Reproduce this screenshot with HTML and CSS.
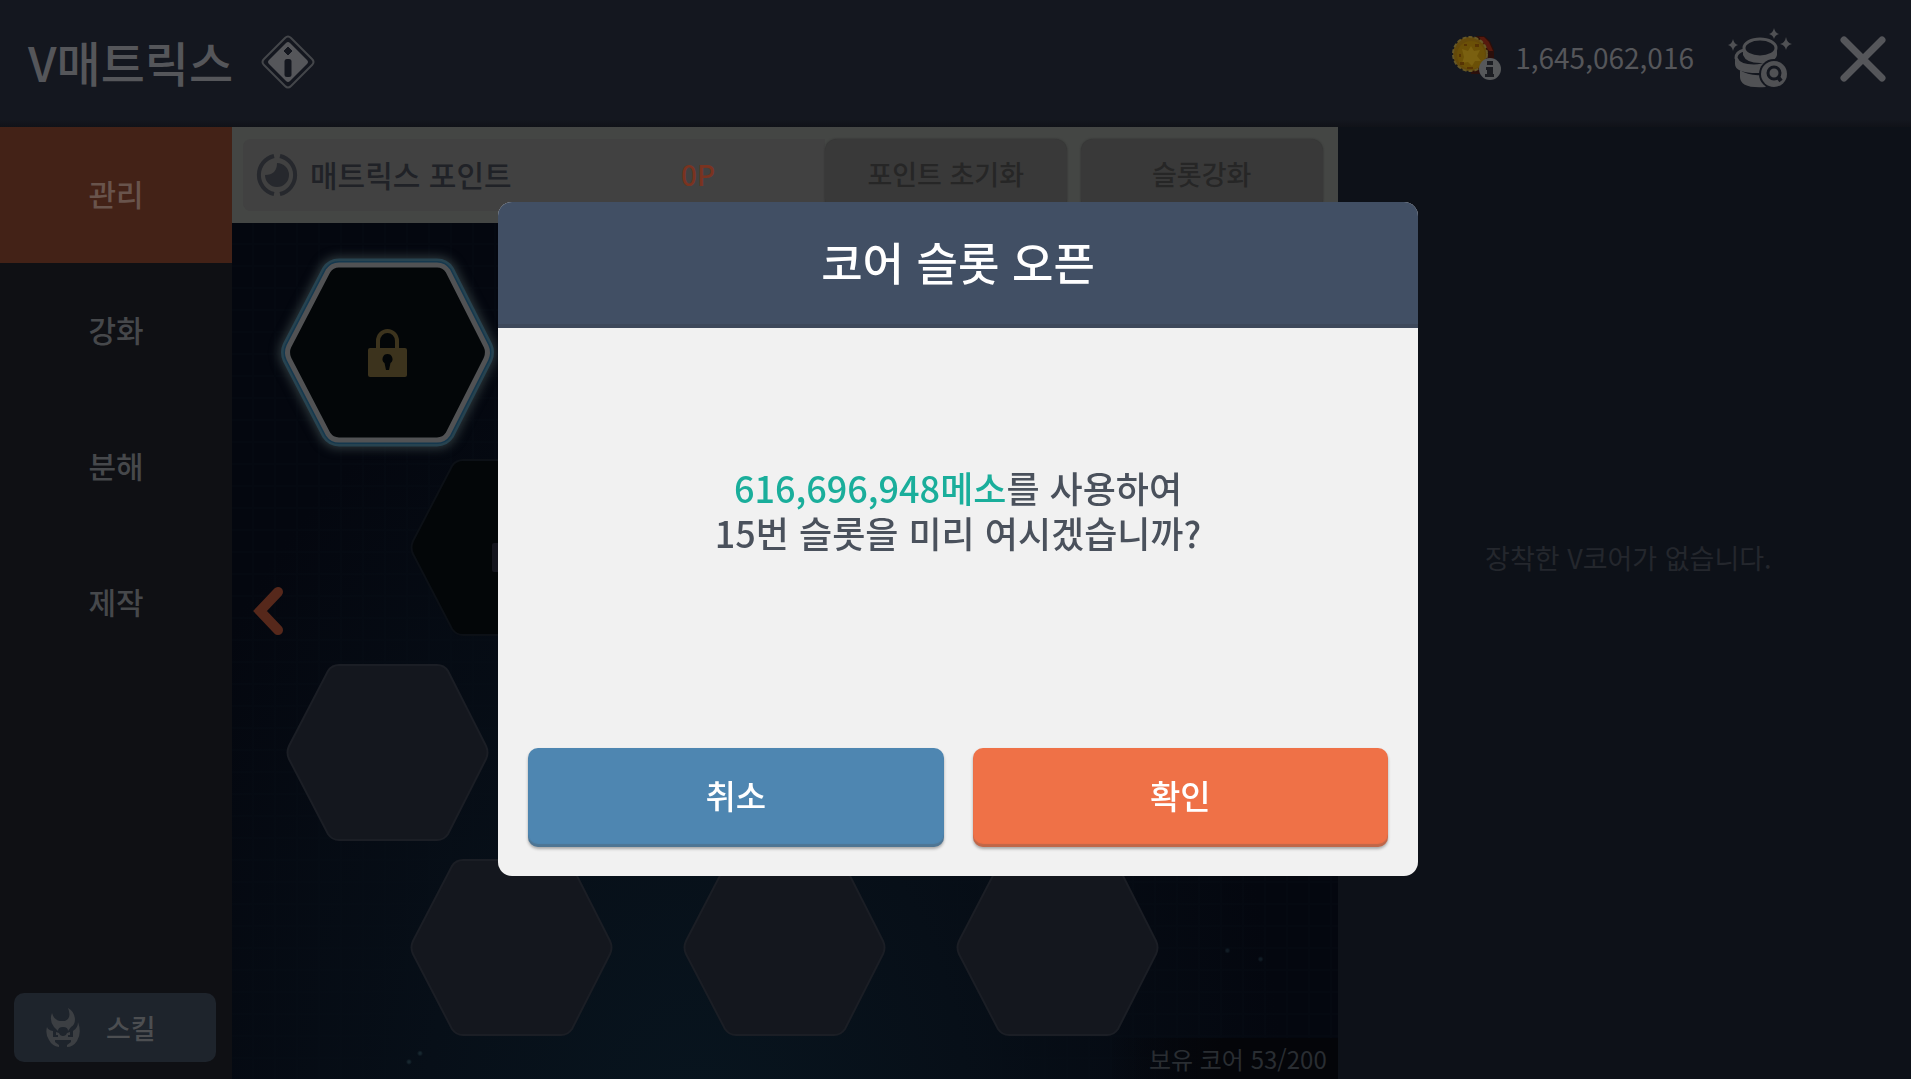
FILE: index.html
```html
<!DOCTYPE html>
<html lang="ko">
<head>
    <meta charset="UTF-8">
    <meta name="viewport" content="width=device-width, initial-scale=1.0">
    <title>V매트릭스</title>
    <link rel="stylesheet" href="styles.css">
</head>
<body>

    <!-- Shared shapes -->
    <svg class="defs" width="0" height="0">
        <defs>
            <path id="hex" d="M53 1 H151 Q158 1 162 7 L200 82 Q203 88.500 200 95 L162 170 Q158 176 151 176 H53 Q46 176 42 170 L3 95 Q0 88.500 3 82 L42 7 Q46 1 53 1 Z"/>
            <g id="lock">
                <path d="M10 22 V12 a9.500 10 0 0 1 19 0 V22" fill="none" stroke="currentColor" stroke-width="4"/>
                <path fill="currentColor" fill-rule="evenodd" d="M2 19 H37 Q39 19 39 21 V46 Q39 48 37 48 H2 Q0 48 0 46 V21 Q0 19 2 19 Z M19.500 25 a5 5 0 0 0 -3 9 l1.500 7 h3 l1.500 -7 a5 5 0 0 0 -3 -9 Z"/>
            </g>
        </defs>
    </svg>

    <!-- Header -->
    <header>
        <div class="title">
            <h1>V매트릭스</h1>
            <button class="icon-btn" aria-label="도움말">
                <svg width="54" height="54" viewBox="0 0 54 54">
                    <path d="M24 3 Q27 0 30 3 L51 24 Q54 27 51 30 L30 51 Q27 54 24 51 L3 30 Q0 27 3 24 Z" fill="none" stroke="#44464a" stroke-width="2"/>
                    <path d="M25 8 Q27 6 29 8 L46 25 Q48 27 46 29 L29 46 Q27 48 25 46 L8 29 Q6 27 8 25 Z" fill="#55565a"/>
                    <path d="M27 12 L31 16 L27 20 L23 16 Z" fill="#14171f" stroke="#14171f"/>
                    <rect x="23.500" y="24" width="7" height="18" rx="2.500" fill="#14171f"/>
                </svg>
            </button>
        </div>
        <div class="wallet">
            <svg width="50" height="46" viewBox="0 0 50 46">
                <path d="M25 1 h8 l6 5 l4 9 v10 l-5 8 l-8 6 h-10 z" fill="#2b0f0b"/>
                <path d="M28 2 h5 l5 5 l4 9 h-4 z" fill="#57190d"/>
                <circle cx="19" cy="19" r="17" fill="#64490a"/>
                <circle cx="19" cy="19" r="17" fill="none" stroke="#665726" stroke-width="2" stroke-dasharray="4 2"/>
                <circle cx="20" cy="20" r="14" fill="#6b5007"/>
                <path d="M11 14 l6 2 l3 -5 l3 5 l6 -1 l-3 6 l4 5 l-6 0 l-3 5 l-4 -4 l-6 1 l2 -6 z" fill="#7a6010"/>
                <path d="M9 27 h4 v3 h-4z M24 9 h4 v3 h-4z M16 32 h6 v2 h-6z M13 9 h3 v2 h-3z M8 19 h2 v3 h-2z" fill="#573404"/>
                <circle cx="39" cy="34" r="11" fill="#56585a"/>
                <path d="M36 26 h6 v4 h-6z M35 32 h7 v7 h1 v3 h-9 v-3 h2 v-4 h-1z" fill="#1b1d22"/>
            </svg>
            <span class="meso">1,645,062,016</span>
        </div>
        <button class="icon-btn" aria-label="메소 내역">
            <svg width="66" height="62" viewBox="0 0 66 62">
                <g fill="#505154">
                    <path d="M46 0 Q47 5 51 6 Q47 7 46 11 Q45 7 41 6 Q45 5 46 0Z"/>
                    <path d="M5 11 Q6 16 10 17 Q6 18 5 23 Q4 18 0 17 Q4 16 5 11Z"/>
                    <path d="M58 9 Q59 15 64 16 Q59 17 58 22 Q57 17 52 16 Q57 15 58 9Z"/>
                    <!-- stacked coins -->
                    <path d="M12 42 Q20 48 34 47 L38 59 Q12 61 12 49Z"/>
                    <path d="M7 30 Q10 40 34 39 V45 Q7 46 7 36Z"/>
                </g>
                <path d="M16 22 Q8 24 8 30 Q11 38 26 38 Q34 38 38 35" fill="none" stroke="#505154" stroke-width="3"/>
                <path d="M15 20 V27 Q18 35 32 35 Q47 35 49 27 V20" fill="#505154"/>
                <ellipse cx="32" cy="20" rx="16" ry="9" fill="#14171f" stroke="#505154" stroke-width="3"/>
                <circle cx="46" cy="46" r="15" fill="#14171f"/>
                <circle cx="46" cy="46" r="13" fill="#505154"/>
                <circle cx="46" cy="45" r="6" fill="none" stroke="#14171f" stroke-width="3"/>
                <path d="M50 49 L53 53" stroke="#14171f" stroke-width="4"/>
            </svg>
        </button>
        <button class="icon-btn close" aria-label="닫기">
            <svg width="46" height="46" viewBox="0 0 46 46">
                <path d="M4 4 L42 42 M42 4 L4 42" stroke="#55565a" stroke-width="7" stroke-linecap="round"/>
            </svg>
        </button>
    </header>

    <div class="content">
        <!-- Side menu -->
        <nav>
            <a href="#" class="tab active">관리</a>
            <a href="#" class="tab">강화</a>
            <a href="#" class="tab">분해</a>
            <a href="#" class="tab">제작</a>
            <button class="skill-btn">
                <svg width="34" height="40" viewBox="0 0 34 40" fill="#3c3f43">
                    <path d="M6 5 Q8 12 14 13 H19 Q26 10 22 0 Q28 3 29 11 Q29 17 25 19 L22 23 Q22 19 17 19 Q12 19 12 23 L8 19 Q3 13 6 5Z"/>
                    <path d="M1 19 Q2 22 7 23 V29 H12 V27 H10 V24 L13 25 Q14 28 17 28 Q20 28 21 25 L24 24 V27 H22 V29 H27 V23 Q32 20 32 14 Q36 25 31 33 Q27 39 21 39 V37 L25 34 V32 H9 V34 L13 37 V39 Q6 38 3 32 Q-1 26 1 19Z"/>
                </svg>
                스킬
            </button>
        </nav>

        <!-- Core slots -->
        <main>
            <div class="point-bar">
                <div class="points">
                    <svg width="44" height="44" viewBox="0 0 44 44">
                        <path d="M19 3 A19.500 19.500 0 0 0 19 41 M25 3 A19.500 19.500 0 0 1 25 41" fill="none" stroke="#26282d" stroke-width="4"/>
                        <path d="M22 10 A12 12 0 1 1 10 22 Q22 22 22 10Z" fill="#26282d"/>
                    </svg>
                    <span class="points-label">매트릭스 포인트</span>
                    <span class="points-value">0P</span>
                </div>
                <button class="bar-btn" disabled>포인트 초기화</button>
                <button class="bar-btn" disabled>슬롯강화</button>
            </div>

            <div class="board">
                <div class="slot-row">
                    <svg class="slot selected" viewBox="0 0 203 177">
                        <use href="#hex" class="glow"/>
                        <use href="#hex" class="ring-blue"/>
                        <use href="#hex" class="ring-line"/>
                        <use href="#hex" class="ring-white"/>
                        <use href="#lock" x="82" y="65"/>
                    </svg>
                    <svg class="slot locked" viewBox="0 0 203 177"><use href="#hex"/></svg>
                    <svg class="slot locked" viewBox="0 0 203 177"><use href="#hex"/></svg>
                    <svg class="slot locked" viewBox="0 0 203 177"><use href="#hex"/></svg>
                </div>
                <div class="slot-row shifted">
                    <svg class="slot locked" viewBox="0 0 203 177"><use href="#hex"/><use href="#lock" x="82" y="65"/></svg>
                    <svg class="slot locked" viewBox="0 0 203 177"><use href="#hex"/></svg>
                    <svg class="slot locked" viewBox="0 0 203 177"><use href="#hex"/></svg>
                </div>
                <div class="slot-row lower">
                    <svg class="slot" viewBox="0 0 203 177"><use href="#hex"/></svg>
                    <svg class="slot" viewBox="0 0 203 177"><use href="#hex"/></svg>
                    <svg class="slot" viewBox="0 0 203 177"><use href="#hex"/></svg>
                    <svg class="slot" viewBox="0 0 203 177"><use href="#hex"/></svg>
                </div>
                <div class="slot-row shifted">
                    <svg class="slot" viewBox="0 0 203 177"><use href="#hex"/></svg>
                    <svg class="slot" viewBox="0 0 203 177"><use href="#hex"/></svg>
                    <svg class="slot" viewBox="0 0 203 177"><use href="#hex"/></svg>
                </div>

                <button class="prev" aria-label="이전">
                    <svg width="30" height="48" viewBox="0 0 30 48">
                        <path d="M25 5 L7 24 L25 43" fill="none" stroke="#56281b" stroke-width="10" stroke-linecap="round"/>
                    </svg>
                </button>
                <div class="core-count">보유 코어 53/200</div>
            </div>
        </main>

        <!-- Core detail -->
        <aside>
            <p>장착한 V코어가 없습니다.</p>
        </aside>
    </div>

    <!-- Popup -->
    <div class="overlay">
        <div class="dialog" role="dialog" aria-labelledby="dialog-title">
            <h2 id="dialog-title">코어 슬롯 오픈</h2>
            <p class="message"><span class="cost">616,696,948메소</span>를 사용하여<br>15번 슬롯을 미리 여시겠습니까?</p>
            <div class="actions">
                <button class="cancel">취소</button>
                <button class="confirm">확인</button>
            </div>
        </div>
    </div>

</body>
</html>
```
FILE: styles.css
```css
* {
    box-sizing: border-box;
}

body {
    margin: 0;
    min-height: 100vh;
    display: flex;
    flex-direction: column;
    background-color: #0d1118;
    font-family: "Noto Sans CJK KR", "Noto Sans", sans-serif;
    font-weight: 500;
    font-size: 27px;
    color: #55565a;
}

h1, h2, p {
    margin: 0;
    font-weight: 500;
}

button {
    font: inherit;
    color: inherit;
    border: none;
    padding: 0;
    cursor: pointer;
}

svg {
    display: block;
}

.defs {
    position: absolute;
}

/* Header */
header {
    display: flex;
    align-items: center;
    height: 127px;
    padding: 0 25px 10px 28px;
    background: linear-gradient(#14171f 94%, #101218);
}

.title {
    display: flex;
    align-items: center;
    gap: 28px;
    padding-top: 6px;
}

h1 {
    font-size: 48px;
    line-height: 52px;
    padding-bottom: 2px;
}

.icon-btn {
    background: none;
}

.wallet {
    display: flex;
    align-items: center;
    gap: 14px;
    margin-left: auto;
    margin-right: 34px;
    padding-bottom: 2px;
    font-size: 28px;
    line-height: 40px;
    font-weight: 400;
}

.meso {
    padding-bottom: 2px;
}

.close {
    margin-left: 46px;
}

.content {
    flex: 1;
    display: flex;
}

/* Side menu */
nav {
    width: 232px;
    display: flex;
    flex-direction: column;
    background-color: #0f1014;
}

.tab {
    height: 136px;
    display: flex;
    align-items: center;
    justify-content: center;
    padding-bottom: 4px;
    font-size: 30px;
    color: #46484b;
    text-decoration: none;
}

.tab.active {
    background-color: #432217;
    color: #69544c;
}

.skill-btn {
    display: flex;
    align-items: center;
    gap: 26px;
    height: 69px;
    margin: auto 16px 17px 14px;
    padding-left: 32px;
    border-radius: 10px;
    background-color: #1e242c;
    color: #4c4e51;
}

/* Core slots */
main {
    flex: 1;
    display: flex;
    flex-direction: column;
}

.point-bar {
    display: flex;
    gap: 14px;
    height: 96px;
    padding: 12px 15px 12px 11px;
    background-color: #444644;
}

.points {
    flex: 1;
    display: flex;
    align-items: center;
    padding-left: 12px;
    margin-right: -14px;
    border-radius: 8px 0 0 8px;
    background-color: #414141;
    font-size: 30px;
}

.points-label {
    margin-left: 11px;
    padding-bottom: 2px;
    color: #202227;
}

.points-value {
    margin: 0 auto;
    padding: 0 0 2px 60px;
    font-size: 28px;
    color: #7a3320;
}

.bar-btn {
    width: 242px;
    padding-bottom: 4px;
    border-radius: 12px;
    background-color: #393939;
    box-shadow: 0 0 2px #2c2c2c;
    color: #262626;
}

.board {
    flex: 1;
    position: relative;
    padding: 41px 0 42px 54px;
    background-color: #04070f;
    background-image:
        radial-gradient(circle at 17% 97%, #17272f 0 1px, transparent 3px),
        radial-gradient(circle at 16% 98%, #17272f 0 1px, transparent 3px),
        radial-gradient(circle at 93% 86%, #111c25 0 1px, transparent 3px),
        radial-gradient(circle at 90% 85%, #111c25 0 1px, transparent 3px),
        radial-gradient(ellipse at 42% 108%, #08151f, #070f18 30%, transparent 65%),
        repeating-linear-gradient(90deg, transparent 0 20px, #050911 20px 22px),
        repeating-linear-gradient(transparent 0 20px, #050911 20px 22px);
}

.slot-row {
    display: flex;
    gap: 70px;
}

.slot-row.shifted {
    margin-top: 18px;
    padding-left: 124px;
}

.slot-row.lower {
    margin-top: 28px;
}

.slot {
    flex: none;
    width: 203px;
    height: 177px;
    overflow: visible;
    fill: #14171e;
    stroke: #1b1e25;
    stroke-width: 2px;
}

.slot.locked {
    fill: #030608;
    stroke: #0c1016;
    color: #14151d;
}

.slot.selected {
    fill: #030608;
    color: #3c331d;
}

.selected .glow {
    stroke: #2a3438;
    stroke-width: 18px;
    filter: blur(5px);
}

.selected .ring-blue {
    stroke: #274350;
    stroke-width: 13px;
}

.selected .ring-line {
    stroke: #15384e;
    stroke-width: 8px;
}

.selected .ring-white {
    stroke: #515254;
    stroke-width: 5px;
}

.slot [href="#lock"] {
    stroke: none;
}

.prev {
    position: absolute;
    left: 21px;
    top: 364px;
    background: none;
}

.core-count {
    position: absolute;
    right: 0;
    bottom: 0;
    padding: 0 11px 0 40px;
    font-size: 24px;
    font-weight: 400;
    line-height: 41px;
    background: linear-gradient(90deg, transparent, #040509 50%);
    color: #292d32;
}

/* Core detail */
aside {
    width: 30%;
    display: flex;
    justify-content: center;
    padding: 410px 0 0 8px;
    font-weight: 400;
    line-height: 42px;
    color: #24272d;
}

aside p {
    font-weight: 400;
}

/* Popup */
.overlay {
    position: fixed;
    inset: 0;
    display: flex;
    align-items: center;
    justify-content: center;
    padding: 0 0 2px 5px;
}

.dialog {
    width: 920px;
    max-width: 90%;
    border-radius: 14px;
    overflow: hidden;
    background-color: #f1f1f1;
    text-align: center;
}

h2 {
    height: 126px;
    border-bottom: 4px solid #3d485a;
    background-color: #414f64;
    color: #fff;
    font-size: 45px;
    line-height: 120px;
}

.message {
    padding: 137px 20px 193px;
    font-size: 36px;
    line-height: 45px;
    color: #4a515c;
}

.cost {
    color: #1aae9b;
}

.actions {
    display: flex;
    gap: 29px;
    padding: 0 30px 29px;
}

.actions button {
    flex: 1;
    height: 99px;
    padding-bottom: 4px;
    border-radius: 10px;
    box-shadow: inset 0 -3px 1px rgba(80, 80, 80, 0.3), 0 2px 3px rgba(0, 0, 0, 0.3);
    color: #fff;
    font-size: 33px;
}

.cancel {
    background-color: #4e86b1;
}

.confirm {
    background-color: #ef7147;
}
```
